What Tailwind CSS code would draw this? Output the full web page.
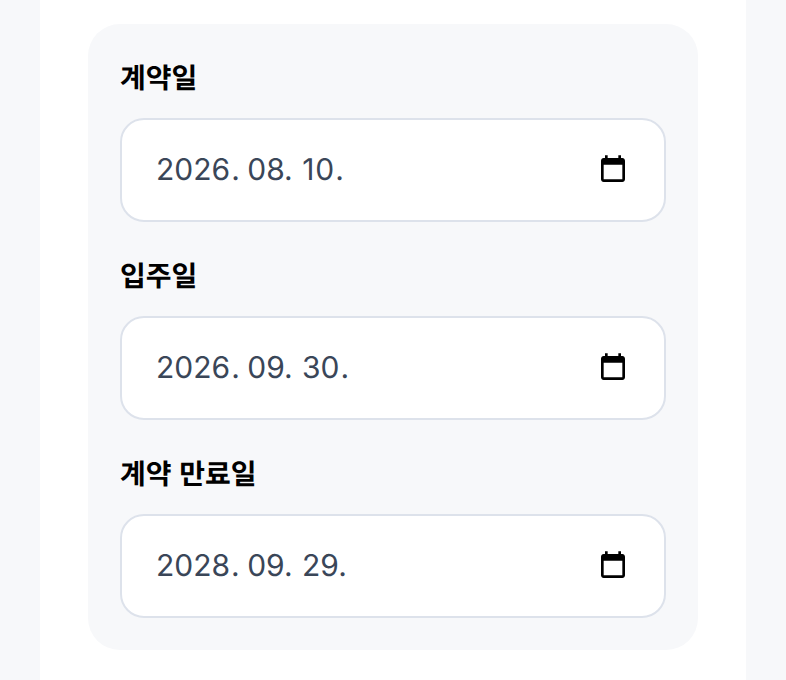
<!DOCTYPE html>
<html lang="ko">
<head>
  <meta charset="UTF-8">
  <meta name="viewport" content="width=device-width, initial-scale=1.0">
  <title>계약 일정</title>
  <script src="https://cdn.jsdelivr.net/npm/@tailwindcss/browser@4"></script>
</head>
<body class="bg-[#f7f8fa] font-['Inter','Noto_Sans_CJK_KR',sans-serif] antialiased [text-rendering:geometricPrecision] overflow-hidden">
  <div class="ml-[40px] w-[706px] h-[680px] bg-white pt-[24px] px-[48px]">
    <div class="bg-[#f7f8fa] rounded-[32px] w-[610px] p-[32px] flex flex-col gap-[32px]">

      <div>
        <div class="text-[28px] leading-[44px] font-bold text-black mb-[18px]">계약일</div>
        <div class="h-[104px] bg-white border-2 border-[#dde2eb] rounded-[24px] pl-[34px] pr-[35px] flex items-center justify-between">
          <span class="text-[30px] text-[#3a4658] whitespace-pre"><span>2026</span><span class="ml-[1px]">.</span><span class="-ml-[1px]"> 08</span><span>.</span><span class="tracking-[1px]"> 10</span><span>.</span></span>
          <svg class="w-[32px] h-[32px] text-black" viewBox="0 0 24 24" fill="currentColor"><path d="M19 3h-1V1h-2v2H8V1H6v2H5c-1.1 0-2 .9-2 2v14c0 1.1.9 2 2 2h14c1.1 0 2-.9 2-2V5c0-1.1-.9-2-2-2zm0 16H5V8h14v11z"/></svg>
        </div>
      </div>

      <div>
        <div class="text-[28px] leading-[44px] font-bold text-black mb-[18px]">입주일</div>
        <div class="h-[104px] bg-white border-2 border-[#dde2eb] rounded-[24px] pl-[34px] pr-[35px] flex items-center justify-between">
          <span class="text-[30px] text-[#3a4658] whitespace-pre"><span>2026</span><span class="ml-[1px]">.</span><span class="-ml-[1px]"> 09</span><span>.</span><span class="ml-[1px]"> 30</span><span class="ml-[1px]">.</span></span>
          <svg class="w-[32px] h-[32px] text-black" viewBox="0 0 24 24" fill="currentColor"><path d="M19 3h-1V1h-2v2H8V1H6v2H5c-1.1 0-2 .9-2 2v14c0 1.1.9 2 2 2h14c1.1 0 2-.9 2-2V5c0-1.1-.9-2-2-2zm0 16H5V8h14v11z"/></svg>
        </div>
      </div>

      <div>
        <div class="text-[28px] leading-[44px] font-bold text-black mb-[18px] [word-spacing:1px]">계약 만료일</div>
        <div class="h-[104px] bg-white border-2 border-[#dde2eb] rounded-[24px] pl-[34px] pr-[35px] flex items-center justify-between">
          <span class="text-[30px] text-[#3a4658] whitespace-pre"><span>2028</span><span class="ml-[1px]">.</span><span class="-ml-[1px]"> 09</span><span>.</span><span class="ml-[1px]"> 29</span><span>.</span></span>
          <svg class="w-[32px] h-[32px] text-black" viewBox="0 0 24 24" fill="currentColor"><path d="M19 3h-1V1h-2v2H8V1H6v2H5c-1.1 0-2 .9-2 2v14c0 1.1.9 2 2 2h14c1.1 0 2-.9 2-2V5c0-1.1-.9-2-2-2zm0 16H5V8h14v11z"/></svg>
        </div>
      </div>

    </div>
  </div>
</body>
</html>
